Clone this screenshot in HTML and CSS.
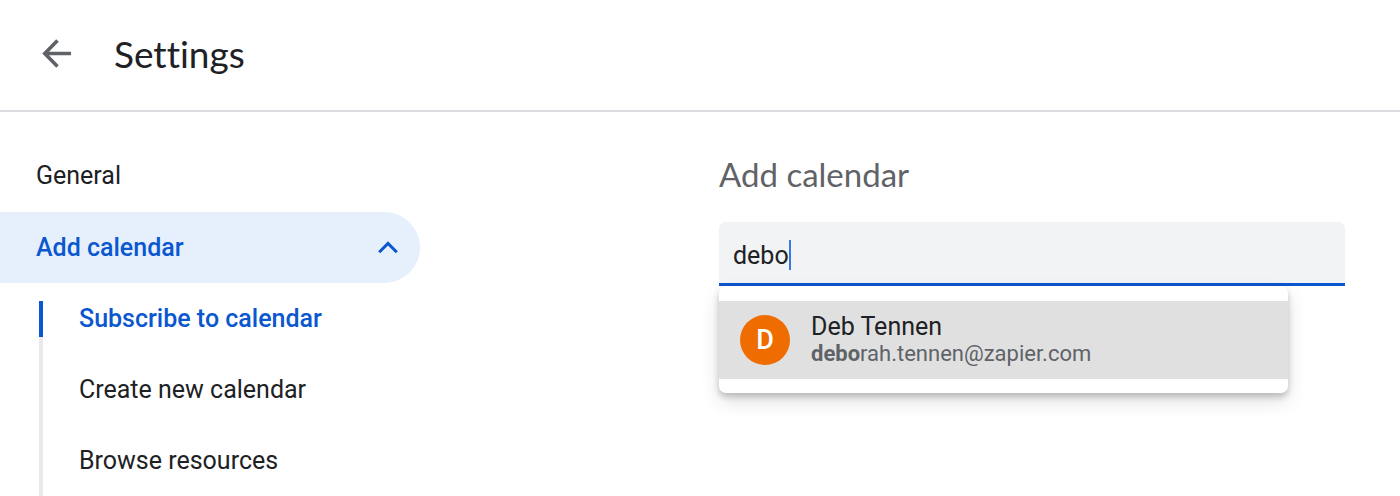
FILE: index.html
```html
<!DOCTYPE html>
<html lang="en">

<head>
    <meta charset="UTF-8" />
    <meta name="viewport" content="width=device-width, initial-scale=1.0">
    <title>Settings</title>
    <link rel="stylesheet" href="styles.css">
</head>

<body>

    <header class="topbar">
        <button class="back" type="button" aria-label="Back">
            <svg viewBox="0 0 30 30" width="30" height="30" fill="none" stroke="currentColor" stroke-width="3.6">
                <path d="M29 14.500H4M15.500 1.500L2.800 14.500l12.700 13" />
            </svg>
        </button>
        <h1 class="title">Settings</h1>
    </header>

    <main class="container">

        <nav class="sidebar">
            <a class="nav-item" href="#general">General</a>
            <button class="nav-item nav-open" type="button" aria-expanded="true">
                Add calendar
                <svg viewBox="0 0 20 14" width="20" height="14" fill="none" stroke="currentColor" stroke-width="3">
                    <path d="M1.200 11.200L10 2.400l8.800 8.800" />
                </svg>
            </button>
            <ul class="subnav">
                <li><a class="active" href="#subscribe">Subscribe to calendar</a></li>
                <li><a href="#create">Create new calendar</a></li>
                <li><a href="#browse">Browse resources</a></li>
            </ul>
        </nav>

        <section class="content">
            <h2 class="heading"><label for="calendar">Add calendar</label></h2>
            <div class="search">
                <div class="field">
                    <input type="text" id="calendar" value="debo" autocomplete="off">
                    <span class="caret"></span>
                </div>
                <div class="menu">
                    <button class="option" type="button">
                        <span class="avatar">D</span>
                        <span class="person">
                            <span class="name">Deb Tennen</span>
                            <span class="email"><b>debo</b>rah.tennen@zapier.com</span>
                        </span>
                    </button>
                </div>
            </div>
        </section>

    </main>

</body>

</html>
```
FILE: styles.css
```css
* {
    margin: 0;
    padding: 0;
    box-sizing: border-box;
}

body {
    height: 100vh;
    display: flex;
    flex-direction: column;
    overflow: hidden;
    background: #fff;
    color: #202124;
    font-family: Roboto, sans-serif;
    font-size: 25px;
}

button,
input {
    border: 0;
    background: none;
    color: inherit;
    font: inherit;
    text-align: left;
}

a {
    color: inherit;
    text-decoration: none;
}

.topbar {
    display: flex;
    align-items: center;
    gap: 42px;
    padding: 30px 42px 32px;
    border-bottom: 2px solid #dadce0;
}

.back {
    display: flex;
    color: #5f6368;
}

.title {
    font-family: Lato, sans-serif;
    font-size: 37px;
    font-variant-ligatures: none;
    font-weight: 400;
    line-height: 48px;
}

.container {
    flex: 1;
    min-height: 0;
    display: flex;
    gap: 299px;
    padding: 28px 55px 0 0;
}

.sidebar {
    width: 420px;
    flex-shrink: 0;
}

.nav-item {
    width: 100%;
    display: flex;
    align-items: center;
    justify-content: space-between;
    padding: 0 22px 0 36px;
    line-height: 72px;
}

.nav-open {
    border-radius: 0 36px 36px 0;
    background: #e6f0fd;
    color: #0b57d0;
    font-weight: 500;
}

.nav-item + .nav-open {
    line-height: 71px;
}

.subnav {
    margin: 18px 0 0 39px;
    list-style: none;
}

.subnav li {
    padding-bottom: 35px;
    border-left: 4px solid #e8eaed;
}

.subnav a {
    display: block;
    margin-left: -4px;
    padding-left: 40px;
    line-height: 36px;
}

.subnav .active {
    padding-left: 36px;
    border-left: 4px solid #0b57d0;
    color: #0b57d0;
    font-weight: 500;
}

.content {
    flex: 1;
    padding-top: 14px;
}

.heading {
    margin-bottom: 28px;
    color: #5f6368;
    font-family: Lato, sans-serif;
    font-size: 33px;
    font-weight: 400;
    line-height: 40px;
}

.search {
    position: relative;
}

.field {
    display: flex;
    align-items: center;
    height: 64px;
    padding: 5px 14px 0;
    border-bottom: 3px solid #0b57d0;
    border-radius: 7px 7px 0 0;
    background: #f1f3f4;
}

.field input {
    field-sizing: content;
    outline: 0;
}

.caret {
    width: 2px;
    height: 30px;
    background: #3b78e7;
}

.menu {
    position: absolute;
    top: 100%;
    left: 0;
    right: 57px;
    padding: 15px 0 14px;
    border-radius: 7px;
    background: #fff;
    box-shadow: 0 4px 6px rgba(0, 0, 0, .2), 0 8px 20px rgba(0, 0, 0, .12);
}

.option {
    width: 100%;
    display: flex;
    align-items: center;
    gap: 21px;
    padding: 12px 21px;
    background: #e0e0e0;
}

.avatar {
    width: 50px;
    height: 50px;
    border-radius: 50%;
    background: #ef6c00;
    color: #fff;
    font-size: 27px;
    font-weight: 500;
    line-height: 50px;
    text-align: center;
}

.person {
    display: flex;
    flex-direction: column;
    line-height: 27px;
}

.email {
    color: #5f6368;
    font-size: 22px;
}
```
